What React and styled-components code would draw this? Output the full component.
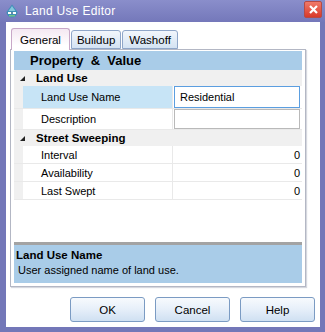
import React, { useState } from 'react'
import styled, { createGlobalStyle } from 'styled-components'

const GlobalStyle = createGlobalStyle`
  html, body { margin: 0; padding: 0; }
  body {
    font-family: 'Liberation Sans', Arial, sans-serif;
    font-size: 11px;
    color: #000;
  }
`

const Window = styled.div`
  width: 325px;
  height: 332px;
  box-sizing: border-box;
  background: #7377b8;
  display: flex;
  flex-direction: column;
  padding: 0 5px 5px 6px;
`

const TitleBar = styled.div`
  height: 22px;
  display: flex;
  align-items: center;
  margin: 0 -5px 0 -6px;
  padding: 0 3px 0 5px;
  background: linear-gradient(#8a8ecb, #7478ba);
  color: #fff;
  font-size: 12px;
`

const Title = styled.span`
  flex: 1;
  margin-left: 6px;
  letter-spacing: 0.3px;
`

const CloseButton = styled.div`
  width: 16px;
  height: 15px;
  margin-top: -3px;
  border-radius: 2px;
  background: linear-gradient(#f07a6a, #d8392a);
  border: 1px solid #b64a45;
  display: flex;
  align-items: center;
  justify-content: center;
`

const Client = styled.div`
  flex: 1;
  background: #fff;
  display: flex;
  flex-direction: column;
  padding: 6px 5px 0 4px;
`

const TabRow = styled.div`
  display: flex;
  padding-left: 1px;
  height: 21px;
  position: relative;
  z-index: 1;
`

const Tab = styled.div`
  height: ${p => (p.active ? '22px' : '19px')};
  margin-top: ${p => (p.active ? '0' : '2px')};
  padding: 0 ${p => p.pad}px;
  margin-right: 1px;
  box-sizing: border-box;
  border: 1px solid ${p => (p.active ? '#c8a8c8' : '#8fa6c8')};
  border-bottom: ${p => (p.active ? 'none' : '1px solid #8fa6c8')};
  border-radius: 3px 3px 0 0;
  background: ${p =>
    p.active
      ? 'linear-gradient(#f4e8f2, #fff 80%)'
      : 'linear-gradient(#f2f6fb, #d4e3f3)'};
  display: flex;
  align-items: center;
  font-size: 11.5px;
`

const Panel = styled.div`
  height: 238px;
  box-sizing: border-box;
  border: 1px solid #b3b7c4;
  box-shadow: 1px 1px 1px #d6d8df;
  margin-right: 9px;
  padding: 1px 3px 3px 3px;
  display: flex;
  flex-direction: column;
`

const Header = styled.div`
  height: 19px;
  background: #a9cce8;
  font-weight: bold;
  font-size: 13px;
  display: flex;
  align-items: center;
  padding-left: 16px;
  white-space: pre;
`

const Grid = styled.div`
  flex: 1;
  display: flex;
  flex-direction: column;
`

const Category = styled.div`
  height: 16px;
  background: #f0f0f0;
  display: flex;
  align-items: center;
  font-weight: bold;
  font-size: 11.5px;
`

const Expander = styled.svg`
  width: 5px;
  height: 5px;
  margin: 0 11px 0 6px;
`

const Row = styled.div`
  height: ${p => p.h || 18}px;
  display: flex;
  border-bottom: 1px solid #e9e9e9;
  box-sizing: border-box;
`

const Gutter = styled.div`
  width: 9px;
  flex-shrink: 0;
  background: #f0f0f0;
`

const NameCell = styled.div`
  width: 150px;
  flex-shrink: 0;
  padding-left: 18px;
  box-sizing: border-box;
  display: flex;
  align-items: center;
  background: ${p => (p.selected ? '#c7e4f6' : '#fff')};
  border-right: 1px solid #e9e9e9;
`

const ValueCell = styled.div`
  flex: 1;
  min-width: 0;
  display: flex;
  align-items: center;
  justify-content: flex-end;
  padding-right: 2px;
`

const Input = styled.input`
  flex: 1;
  min-width: 0;
  width: 0;
  height: 100%;
  box-sizing: border-box;
  margin: 0 0 0 1px;
  border: 1px solid ${p => (p.focused ? '#5b9ee0' : '#b9b9b9')};
  padding: 0 5px;
  font: inherit;
  font-size: 11px;
  outline: none;
  background: #fff;
`

const Spacer = styled.div`
  flex: 1;
`

const HelpSplit = styled.div`
  height: 3px;
  background: #a3a3a3;
`

const HelpBox = styled.div`
  height: 38px;
  background: #a9cce8;
  padding: 4px 2px 0 2px;
  box-sizing: border-box;
  display: flex;
  flex-direction: column;
  gap: 3px;
`

const HelpTitle = styled.div`
  font-weight: bold;
  font-size: 11.5px;
`

const HelpText = styled.div`
  padding-left: 2px;
`

const ButtonRow = styled.div`
  display: flex;
  justify-content: flex-end;
  gap: 10px;
  margin-top: 10px;
`

const Button = styled.button`
  width: 75px;
  height: 25px;
  border: 1px solid #7b9bc3;
  border-radius: 3px;
  background: linear-gradient(#f7fafd 0%, #e8f0fa 45%, #cfe0f2 100%);
  font: inherit;
  font-size: 11.5px;
  color: #000;
  padding: 0;
`

const DropIcon = () => (
  <svg width="14" height="15" viewBox="0 0 14 15">
    <path d="M7 0.5 L12.5 8 A5.5 5.5 0 0 1 1.5 8 Z" fill="#3f8fb8" />
    <path d="M7 2 L10.5 7 L3.5 7 Z" fill="#86c7dc" />
    <rect x="3" y="8" width="8" height="2" fill="#ffffff" />
    <rect x="4" y="11" width="6" height="1.5" fill="#6fc28a" />
    <circle cx="7" cy="9" r="1" fill="#2a6b8f" />
  </svg>
)

const CloseIcon = () => (
  <svg width="9" height="9" viewBox="0 0 9 9">
    <path d="M1 1 L8 8 M8 1 L1 8" stroke="#fff" strokeWidth="2.2" />
  </svg>
)

const Triangle = () => (
  <Expander viewBox="0 0 5 5">
    <path d="M5 0 L5 5 L0 5 Z" fill="#222" />
  </Expander>
)

export default function App() {
  const [name, setName] = useState('Residential')
  const [desc, setDesc] = useState('')

  const sweeping = [
    ['Interval', '0'],
    ['Availability', '0'],
    ['Last Swept', '0'],
  ]

  return (
    <>
      <GlobalStyle />
      <Window>
        <TitleBar>
          <DropIcon />
          <Title>Land Use Editor</Title>
          <CloseButton><CloseIcon /></CloseButton>
        </TitleBar>
        <Client>
          <TabRow>
            <Tab active pad={8}>General</Tab>
            <Tab pad={5}>Buildup</Tab>
            <Tab pad={6}>Washoff</Tab>
          </TabRow>
          <Panel>
            <Grid>
              <Header>{'Property  &  Value'}</Header>
              <Category><Triangle />Land Use</Category>
              <Row h={23}>
                <Gutter />
                <NameCell selected>Land Use Name</NameCell>
                <ValueCell>
                  <Input focused value={name} onChange={e => setName(e.target.value)} />
                </ValueCell>
              </Row>
              <Row h={21}>
                <Gutter />
                <NameCell>Description</NameCell>
                <ValueCell>
                  <Input value={desc} onChange={e => setDesc(e.target.value)} />
                </ValueCell>
              </Row>
              <Category><Triangle />Street Sweeping</Category>
              {sweeping.map(([label, val]) => (
                <Row key={label}>
                  <Gutter />
                  <NameCell>{label}</NameCell>
                  <ValueCell>{val}</ValueCell>
                </Row>
              ))}
              <Spacer />
              <HelpSplit />
              <HelpBox>
                <HelpTitle>Land Use Name</HelpTitle>
                <HelpText>User assigned name of land use.</HelpText>
              </HelpBox>
            </Grid>
          </Panel>
          <ButtonRow>
            <Button>OK</Button>
            <Button>Cancel</Button>
            <Button>Help</Button>
          </ButtonRow>
        </Client>
      </Window>
    </>
  )
}
